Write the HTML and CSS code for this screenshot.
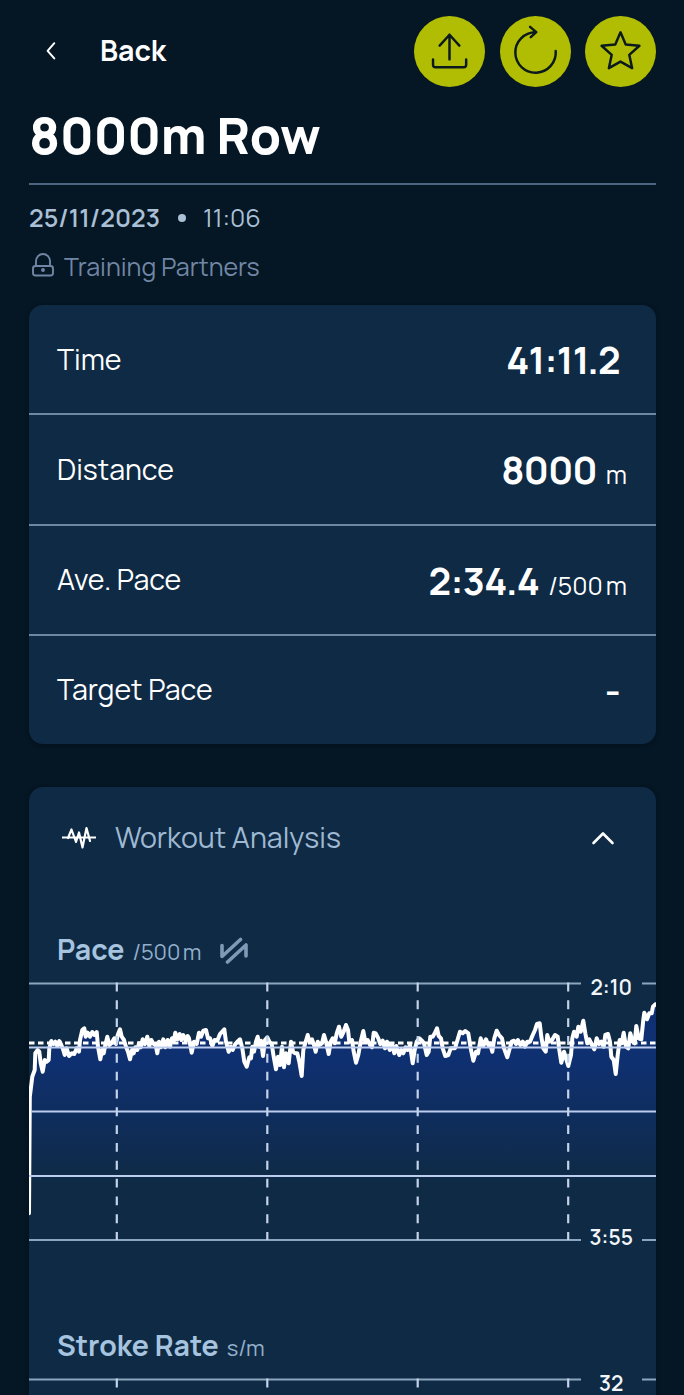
FILE: index.html
```html
<!DOCTYPE html>
<html lang="en">
<head>
  <meta charset="UTF-8">
  <meta name="viewport" content="width=device-width,initial-scale=1">
  <title>8000m Row</title>
  <link rel="stylesheet" href="styles.css">
</head>
<body>
  <header class="topbar">
    <a class="back" href="#">
      <svg class="back-icon" width="12" height="20" viewBox="0 0 12 20"><path d="M9.3 2.2 2.6 9.8l6.7 7.6"/></svg>
      <span class="back-label">Back</span>
    </a>
    <div class="actions">
      <button class="action" aria-label="Share">
        <svg width="71" height="71" viewBox="0 0 72 72"><path d="M36 44V19M26 30l10-11 10 11M19.300 44v5.500q0 2.500 2.500 2.500h28.600q2.500 0 2.500-2.500V44"/></svg>
      </button>
      <button class="action" aria-label="Repeat">
        <svg width="71" height="71" viewBox="0 0 72 72"><path d="M56.500 35.500A20.500 20.500 0 1 1 36 16.500M30.500 11l6.300 5.400-5.600 5"/></svg>
      </button>
      <button class="action" aria-label="Favourite">
        <svg width="71" height="71" viewBox="0 0 72 72"><path d="m36 16.500 5.300 12.300 13.900 1.400-10.300 9.200 2.900 13.500L36 46.200 24.200 52.900l2.900-13.500-10.300-9.200 13.900-1.400z"/></svg>
      </button>
    </div>
  </header>

  <h1 class="title">8000m Row</h1>
  <div class="meta">
    <span class="date">25/11/2023</span>
    <span class="dot"></span>
    <span class="clock">11:06</span>
  </div>
  <div class="privacy">
    <svg width="26" height="28" viewBox="0 0 26 28"><rect x="3" y="14" width="20" height="9.500" rx="2.500"/><path d="M6 14V9a7 7 0 0 1 14 0V14"/><circle cx="13" cy="18" r="1"/></svg>
    <span>Training Partners</span>
  </div>

  <section class="card summary">
    <div class="row"><span class="name">Time</span><span class="value time">41:11.2</span></div>
    <div class="row"><span class="name">Distance</span><span><span class="value">8000</span><span class="unit">m</span></span></div>
    <div class="row"><span class="name">Ave. Pace</span><span><span class="value">2:34.4</span><span class="unit">/500 m</span></span></div>
    <div class="row"><span class="name">Target Pace</span><span class="value none">-</span></div>
  </section>

  <section class="card analysis">
    <div class="analysis-head">
      <svg class="wave" width="34" height="28" viewBox="0 0 34 28"><path d="M0 13.500h34M6 14 9.500 5.500 14 18 17 8.500 20.500 23.500 24.500 4 28 17"/></svg>
      <h2 class="analysis-title">Workout Analysis</h2>
      <svg class="chevron" width="24" height="16" viewBox="0 0 24 16"><path d="M2.500 13 12 3.500l9.500 9.500"/></svg>
    </div>

    <div class="chart-head">
      <span class="chart-name">Pace</span>
      <span class="chart-unit">/500 m</span>
      <svg class="compare" width="30" height="28" viewBox="0 0 30 28"><path d="M3 9.500v11L21.500 3.500M8.500 26 27 9v11"/></svg>
    </div>
    <svg class="chart" width="627" height="284" viewBox="0 -10 627 284">
      <defs>
        <linearGradient id="fill" gradientUnits="userSpaceOnUse" x1="0" y1="30" x2="0" y2="205">
          <stop offset="0" stop-color="#0e2f72"/>
          <stop offset="0.300" stop-color="#0f3070"/>
          <stop offset="1" stop-color="#0f2f70" stop-opacity="0"/>
        </linearGradient>
      </defs>
      <!-- pace curve, runs out of the box on the right and is closed below it -->
      <path class="curve" fill="url(#fill)" d="M0 233.300 0.800 116.700 3.300 96.700 5.700 90 6.300 73.300 8.700 70 10.300 71.700 11.700 83.300 13.700 91.700 15.700 80 17.700 81.700 19.700 80 20.300 68.300 22.300 61 24.300 64 26.300 61.700 28.300 66 30.300 61 32.300 65 33.700 68.300 35.700 75 37.700 68.300 40 76 42.700 73.300 45.300 74 47.700 68.300 50 71.700 51 60 53.300 50 55.300 48.300 56.700 56.700 58.700 52.700 61 56.700 63.300 52 65.300 55 67.700 52 69 66.700 71.300 79.300 73 70 74.700 73.300 76.300 65 78.300 56.700 80.300 65 82.700 62.700 85.300 58.300 87 64 88.700 55 91 49.300 92.700 56.700 95 60 97 66.700 99 71.700 101 79.300 103 70 104.700 73.300 106.300 67.300 108.300 70 110 63.300 111.700 67.300 113.700 59.300 116 64 118.300 56.700 120.300 66 122.300 60 124.700 64 126.700 65 128.300 73.300 130 61.700 132 67.300 134.300 59.300 136.300 67.300 138.700 60 141 66.700 143 58.300 144.700 61.700 146.300 52.700 148.300 59.300 150.700 54 152.300 60 154.300 55 156.700 60.700 158.700 56
        160 58.300 162.700 72.700 165 61.700 167.700 64 170 52.700 172 56.700 174.300 50.700 177 50 179 58.300 181 58.300 183.300 66 185.700 60 188.300 60.700 191 54 195.300 49.300 197 61.700 199.700 71.700 201.700 66.700 203.700 70 206.300 64 208.300 61.700 211 59.300 213.300 68.300 215.300 81.700 217.700 86.700 220.300 77.300 222 78.300 223.300 66.700 225 71.700 227 61.700 228.700 56.700 230.300 66.700 232 60.700 234 76 236 60 238.300 57.300 240.300 61.700 242.700 64 244.700 76.700 247 89.300 249 76.700 251 85 253 66.700 255 87.300 257 73.300 259.700 83.300 262 61.700 264 71.700 266 73.300 268.300 73.300 270.300 81.700 272.700 96 274.300 70 276.700 61.700 278.700 55 280.700 61.700 283 59.300 285 65 286.700 71.700 288.700 61.700 290.300 65 293 63.300 295 55 297 61.700 299.700 74 301.700 61.700 303.700 58.300 305.700 63.300 307.700 53.300 310 46.700 312.300 56.700 314.700 51.700 317 45 319 50 320.300 61.700
        323 60 324.700 71.700 327 82.700 329.300 75 331.700 61.700 334.300 51 336.300 61.700 338.700 60 341 65 343 67.300 344.700 52.700 346.700 53.300 349.300 58.300 351.300 64 353.700 60.700 356 68.300 358 61.700 360.700 70 363 64 365.300 73.300 367.300 66 370.300 75 372.300 70 374.300 73.300 376.700 67.300 378.700 70 381 65 383.700 83.300 385.700 70 387.700 61.700 390.300 58.300 393 60.700 395 63.300 397.700 75 399.700 71.700 401.300 56.700 403.700 56.700 405.700 53.300 408 48.300 409.700 56 412 58.300 413.700 68.300 416.300 76 419.300 75 421.700 68.300 426 68.300 429 58.300 431 51.700 433.700 53.300 436.300 51 439.300 53.300 441.700 68.300 444.300 80.700 447 71.700 449 73.300 451.700 58.300 454.300 66 457 59.300 459.300 65 461 63.300 463.300 71.700 465.300 58.300 467.700 50.700 470 55 473 58.300 475 68.300 478.300 77.300
        480.300 70 482.700 61.700 485 60.700 487 64 489 60 491.300 65 493.700 61.700 496 66.700 498.300 61.700 501 61.700 503.300 56 506 50 508 44 510.700 43.300 512.300 56.700 514.300 68.300 516.700 71.700 518.300 55 520.300 61.700 523 60 526 55 528.700 56.700 530.300 70 532.300 82.700 535 71.700 537 78.300 539.300 86 542 75 543.300 58.300 545 51.700 547.700 56.700 549.300 46.700 551.700 51.700 554.300 40.700 556.300 53.300 558.300 63.300 560.300 59.300 563 65 565.300 69.300 567.700 58.300 570 64 572.300 61.700 574.700 66.700 576.300 55 579 54 581 61.700 582.300 76.700 584.700 80 586.700 94 588.700 75 590.700 60 592.700 63.300 594.700 52.700 597 66.700 599.300 68.300 601.300 53.300 603.700 61.700 605.700 63.300 607.300 46 609.700 58.300 612.300 59.300 614.300 40 615.300 32.700 618 39.300 620.300 33.300 622.700 33.300 624 26.700 626.300 24.300H640V290H1"/>
      <path class="edge" d="M0 3.500h552M613 3.500h14M0 260h552M613 260h14"/>
      <path class="grid" d="M0 67.500h627M2 131.500h625M0 196h627"/>
      <path class="split" d="M87.800 2.500V260M238.300 2.500V260M388.700 2.500V260M539.200 2.500V260"/>
      <path class="average" d="M0 63h627"/>
      <text class="tick" x="561.500" y="15">2:10</text>
      <text class="tick" x="560.500" y="265">3:55</text>
    </svg>

    <div class="chart-head rate">
      <span class="chart-name">Stroke Rate</span>
      <span class="chart-unit">s/m</span>
    </div>
    <svg class="chart" width="627" height="284" viewBox="0 -10 627 284">
      <path class="edge" d="M0 3.500h552M613 3.500h14"/>
      <path class="split" d="M87.800 2.500V260M238.300 2.500V260M388.700 2.500V260M539.200 2.500V260"/>
      <text class="tick" x="570" y="15">32</text>
    </svg>
  </section>
</body>
</html>
```

FILE: styles.css
```css
* { box-sizing: border-box; }
html { height: 100%; overflow: hidden; }
body { height: 1395px; overflow: hidden; margin: 0; padding: 15px 28px 0 29px; background: #051624; color: #fff; font-family: Manrope, Inter, sans-serif; }
svg { display: block; fill: none; stroke-linecap: round; stroke-linejoin: round; }

.topbar { display: flex; justify-content: space-between; height: 72px; }
.back { display: flex; align-items: center; gap: 43px; padding-left: 16px; color: #fff; text-decoration: none; }
.back-icon { stroke: #fff; stroke-width: 2; }
.back-label { font-size: 28.500px; font-weight: 700; line-height: 36px; }
.actions { display: flex; align-items: center; gap: 14.500px; }
.action { width: 71px; height: 71px; padding: 0; border: none; border-radius: 50%; background: #b1bd03; }
.action svg { stroke: #0b1a1c; stroke-width: 2.500; }

.title { height: 98px; margin: 0; padding-top: 16px; border-bottom: 2px solid #4c6580; font-size: 50px; font-weight: 800; line-height: 64px; letter-spacing: -0.100px; }
.meta { display: flex; align-items: center; height: 50px; margin-top: 8px; font-size: 25px; line-height: 50px; color: #a9c0d6; }
.date { font-weight: 600; }
.dot { width: 8px; height: 8px; margin: 0 17px 0 18px; border-radius: 50%; background: #a9c0d6; }
.clock { font-weight: 400; }
.privacy { display: flex; align-items: center; gap: 8px; height: 48px; margin: -1px 0 0 1px; color: #7186a4; font-size: 25px; font-weight: 400; }
.privacy svg { stroke: #7186a4; stroke-width: 1.900; }

.card { border-radius: 14px; background: #0f2a44; box-shadow: 0 1px 5px #0004; overflow: hidden; }
.summary { margin-top: 15px; }
.row { display: flex; align-items: center; justify-content: space-between; height: 110.300px; padding: 0 29px 0 28px; border-bottom: 2px solid #6e87a2; }
.row:last-child { height: 108px; border-bottom: none; }
.name { font-size: 28.500px; font-weight: 400; }
.value { font-size: 38px; font-weight: 700; letter-spacing: -0.700px; }
.time, .none { margin-right: 7px; }
.unit { margin-left: 9px; font-size: 25px; font-weight: 400; word-spacing: -2px; }

.analysis { height: 640px; margin-top: 43px; }
.analysis-head { display: flex; align-items: center; height: 102px; padding: 0 41px 0 33px; }
.wave { stroke: #fff; stroke-width: 2.200; }
.analysis-title { flex: 1; margin: 0 0 0 19px; color: #9fb9d2; font-size: 28.500px; font-weight: 400; }
.chevron { stroke: #fff; stroke-width: 2.600; }

.chart-head { display: flex; align-items: baseline; height: 40px; margin-top: 41px; padding-left: 28px; line-height: 40px; color: #a6c3df; }
.chart-name { font-size: 28.500px; font-weight: 700; }
.chart-unit { margin-left: 8px; font-size: 22px; font-weight: 400; word-spacing: -2px; color: #93afcb; }
.compare { align-self: center; margin: 0 0 0 17px; stroke: #7f9ab7; stroke-width: 3.600; }
.rate { margin-top: 72px; }

.curve { stroke: #fff; stroke-width: 4; }
.edge { stroke: #8ba6be; stroke-width: 2; stroke-linecap: butt; }
.grid { stroke: #bdcdf0; stroke-width: 2; stroke-linecap: butt; }
.split { stroke: #c3d3ea; stroke-width: 2.200; stroke-dasharray: 8.900 8.930; stroke-linecap: butt; }
.average { stroke: #fff; stroke-width: 3; stroke-dasharray: 5.500 3.500; stroke-linecap: butt; }
.tick { fill: #f2f6fb; font-size: 21px; font-weight: 600; }
```
